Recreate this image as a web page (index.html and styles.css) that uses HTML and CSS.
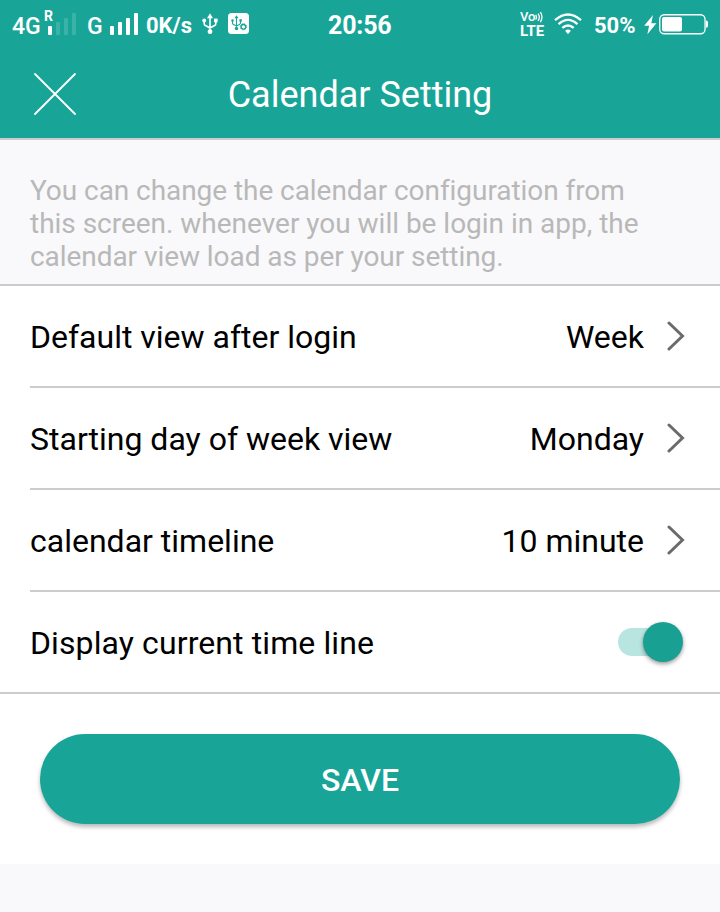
FILE: index.html
```html
<!DOCTYPE html>
<html lang="en">
<head>
<meta charset="utf-8">
<title>Calendar Setting</title>
<link rel="stylesheet" href="styles.css">
</head>
<body>
<header class="top">
  <div class="status">
    <span class="network">4G</span>
    <span class="roaming">
      <svg width="30" height="24" fill="#fff"><rect x="0" y="14" width="4" height="9" rx="1"/><g opacity=".15"><rect x="8" y="10" width="4" height="13" rx="1"/><rect x="16" y="6" width="4" height="17" rx="1"/><rect x="24" y="1" width="4" height="22" rx="1"/></g></svg>
      <span class="roaming-mark">R</span>
    </span>
    <span class="network second">G</span>
    <svg class="signal" width="29" height="24" fill="#fff"><rect x="0" y="14" width="4" height="9" rx="1"/><rect x="8" y="10" width="4" height="13" rx="1"/><rect x="16" y="6" width="4" height="17" rx="1"/><rect x="24" y="1" width="4" height="22" rx="1"/></svg>
    <span class="speed">0K/s</span>
    <svg class="usb" width="16" height="22" viewBox="0 0 16 22" fill="none" stroke="#fff" stroke-width="1.6"><path d="M8 3v15M2.2 7.5v3.2q0 1.1 1.2 1.8L8 15l4.6-2.5q1.2-.7 1.2-1.8V7.5"/><path d="M8 .3 11 5.3H5z" fill="#fff" stroke="none"/><circle cx="8" cy="18.7" r="2.4" fill="#fff" stroke="none"/><circle cx="2.2" cy="7.5" r="1.9" fill="#fff" stroke="none"/><path d="M12 5.6h3.6v3.6H12z" fill="#fff" stroke="none"/></svg>
    <svg class="usb-debug" width="21" height="21" viewBox="0 0 21 21" fill="none" stroke="#18a598"><rect width="21" height="21" rx="3.5" fill="#fff" stroke="none"/><path d="M8.5 4v11M4.5 7v3q0 1 1 1.5l3 1.5 3-1.5q1-.5 1-1.5V7" stroke-width="1.1"/><path d="m8.5 2.2 2 3h-4z" fill="#18a598" stroke="none"/><g fill="#18a598" stroke="none"><circle cx="8.5" cy="15.5" r="1.7"/><circle cx="4.5" cy="7.5" r="1.2"/><path d="M11.4 6.2h2.4v2.4h-2.4z"/></g><circle cx="15.4" cy="13.8" r="3.8" fill="#fff" stroke="none"/><circle cx="15.4" cy="13.8" r="2.3" stroke-width="1.3"/><circle cx="15.4" cy="13.8" r="3.1" stroke-width="1" stroke-dasharray="1.2 1.235"/></svg>
    <time class="clock">20:56</time>
    <span class="volte"><span class="vo">Vo<svg width="8" height="12" viewBox="0 0 8 12" fill="none" stroke="#fff" stroke-width="1.3"><path d="M.6 4q1.7 2.2 0 4.6M3 2.6q2.7 3.6 0 7.2M5.4 1.2q3.2 4.8 0 10"/></svg></span><span class="lte">LTE</span></span>
    <svg class="wifi" width="28" height="22" viewBox="0 0 28 22" fill="none" stroke="#fff" stroke-width="2.3"><path d="M1 7.2Q14-4.3 27 7.2M4.6 11.1q9.4-8.5 18.8 0M8.3 14.9q5.7-4.9 11.4 0"/><path d="M11.1 17.8q2.9-2.8 5.8 0L14 21.2z" fill="#fff" stroke="none"/></svg>
    <span class="percent">50%</span>
    <svg class="bolt" width="13" height="20" viewBox="0 0 13 20" fill="#fff"><path d="M9 0 .2 10.8h4.9L3.4 19.3 12.4 8.2H7.3z"/></svg>
    <svg class="battery" width="50" height="21" fill="none"><rect x=".75" y=".75" width="45.3" height="19" rx="4.5" stroke="#fff" stroke-width="1.3"/><rect x="3" y="3" width="20" height="14.5" rx="2" fill="#fff"/><path d="M47 6.5q2 0 2 2v3.2q0 2-2 2z" fill="#fff"/></svg>
  </div>
  <div class="bar">
    <svg class="close" width="44" height="44" fill="none" stroke="#fff" stroke-width="1.8" stroke-linecap="round"><path d="m2 2 40 40M42 2 2 42"/></svg>
    <h1 class="title">Calendar Setting</h1>
  </div>
</header>
<p class="intro">You can change the calendar configuration from<br><span class="wide">this screen. whenever you will be login in app, the</span><br>calendar view load as per your setting.</p>
<main>
  <div class="settings">
    <div class="row"><span class="label">Default view after login</span><span class="value">Week</span><svg class="chevron" width="18" height="30"><path d="m2 2 13.5 13L2 28"/></svg></div>
    <div class="row"><span class="label">Starting day of week view</span><span class="value">Monday</span><svg class="chevron" width="18" height="30"><path d="m2 2 13.5 13L2 28"/></svg></div>
    <div class="row"><span class="label">calendar timeline</span><span class="value">10 minute</span><svg class="chevron" width="18" height="30"><path d="m2 2 13.5 13L2 28"/></svg></div>
    <div class="row"><span class="label">Display current time line</span><span class="switch"><span class="thumb"></span></span></div>
  </div>
  <div class="actions"><button class="save">SAVE</button></div>
</main>
</body>
</html>
```

FILE: styles.css
```css
* { box-sizing: border-box; }
body { margin: 0; min-height: 912px; background: #f9f9fb; color: #000; font-family: Roboto, sans-serif; }
svg { display: block; flex: none; }
.top { height: 140px; background: #18a598; border-bottom: 2px solid #ccc; color: #fff; }
.status { height: 48px; display: flex; align-items: flex-start; white-space: nowrap; padding-left: 12px; }
.status > * { flex: none; }
.network { width: 36px; margin-top: 13px; font: 500 23px/28px Roboto, sans-serif; }
.roaming { position: relative; width: 39px; margin-top: 12px; }
.roaming-mark { position: absolute; left: -4px; top: -3px; font: 700 14px/14px Roboto, sans-serif; }
.second { width: 23px; }
.signal { margin-top: 12px; margin-right: 7px; }
.speed { width: 56px; margin-top: 12px; font: 700 22px/28px Roboto, sans-serif; }
.usb { margin-top: 13px; margin-right: 10px; }
.usb-debug { margin-top: 13px; }
.clock { width: 271px; padding-left: 79px; margin-top: 11px; font: 700 25px/30px Roboto, sans-serif; letter-spacing: -.2px; }
.volte { width: 34px; margin-top: 9px; display: flex; flex-direction: column; }
.vo { display: flex; height: 15px; align-items: center; font: 500 13px/15px Roboto, sans-serif; }
.lte { font: 700 15px/15px Roboto, sans-serif; }
.wifi { margin-top: 13px; }
.percent { width: 62px; padding-left: 12px; margin-top: 12px; font: 700 22px/28px Roboto, sans-serif; }
.bolt { margin-top: 15px; margin-right: 2px; }
.battery { margin-top: 14px; }
.bar { height: 90px; display: grid; grid-template-columns: 130px 1fr 130px; align-items: center; }
.close { margin: 2px 0 0 33px; }
.title { margin: 3px 0 0; text-align: center; font-size: 36px; line-height: 44px; font-weight: 400; }
.intro { height: 146px; margin: 0; padding: 34px 30px 0; border-bottom: 2px solid #ccc; color: #b8b8b8; font-size: 28px; line-height: 33px; letter-spacing: -.06px; }
.wide { letter-spacing: -.02px; }
main { background: #fff; }
.settings { padding-left: 30px; border-bottom: 2px solid #ccc; }
.row { height: 102px; display: flex; align-items: center; padding-right: 35px; border-bottom: 2px solid #ccc; font-size: 32px; }
.row:last-child { height: 100px; border-bottom: 0; padding-right: 37px; }
.label, .value { padding-top: 2px; }
.label { flex: 1; }
.row:last-child .label { letter-spacing: .1px; }
.chevron { margin-left: 23px; fill: none; stroke: #6b6b6b; stroke-width: 3; stroke-linecap: round; stroke-linejoin: miter; }
.switch { width: 65px; height: 28px; display: flex; align-items: center; justify-content: flex-end; border-radius: 14px; background: linear-gradient(90deg, #b9e5e1 50px, transparent 50px); }
.thumb { width: 40px; height: 40px; flex: none; border-radius: 50%; background: #18a192; box-shadow: 0 2px 4px rgba(0,0,0,.4); }
.actions { height: 170px; padding: 40px; }
.save { display: block; width: 100%; height: 90px; padding: 2px 0 0; border: 0; border-radius: 45px; background: #18a598; color: #fff; font: 500 32px/40px Roboto, sans-serif; box-shadow: 0 3px 4px rgba(0,0,0,.28); }
```
